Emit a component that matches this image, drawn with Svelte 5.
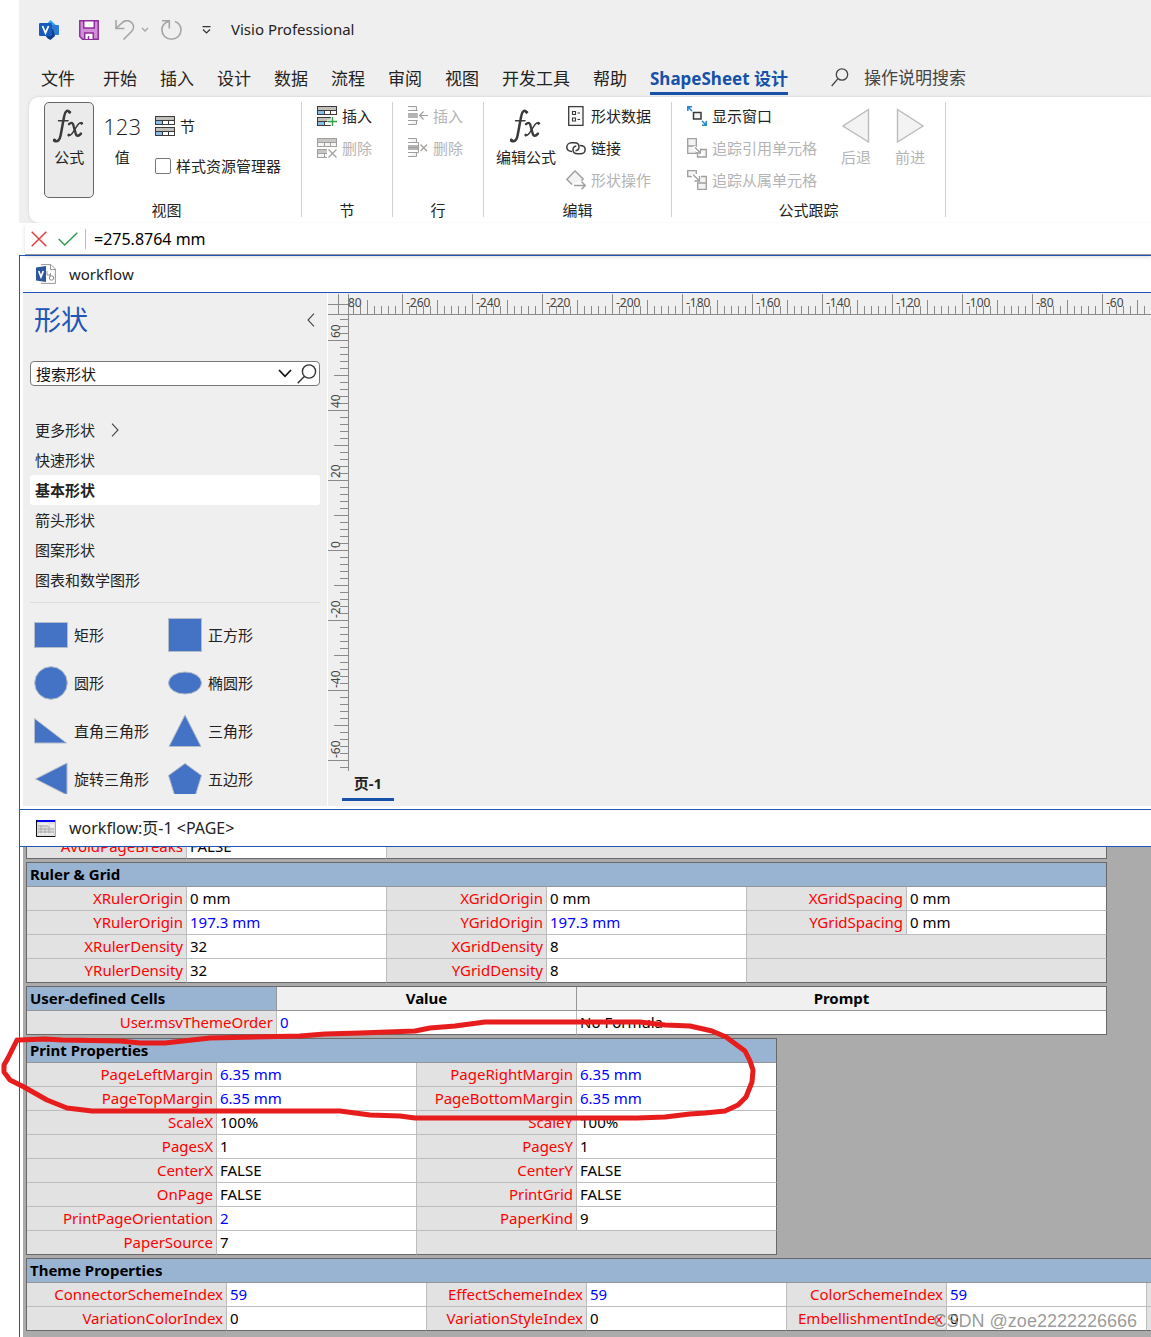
<script>
  const tabs = ['开始', '插入', '设计', '数据', '流程', '审阅', '视图', '开发工具', '帮助'];
  const stencils = ['快速形状', '基本形状', '箭头形状', '图案形状', '图表和数学图形'];
  const shapes = [
    { name: '矩形', kind: 'rect' },
    { name: '正方形', kind: 'square' },
    { name: '圆形', kind: 'circle' },
    { name: '椭圆形', kind: 'ellipse' },
    { name: '直角三角形', kind: 'right' },
    { name: '三角形', kind: 'triangle' },
    { name: '旋转三角形', kind: 'rotated' },
    { name: '五边形', kind: 'pentagon' }
  ];

  const hTicks = Array.from({ length: 340 }, (_, i) => {
    const x = 4 + i * 7;
    const step = (x - 53 + 700) % 70;
    return { x: x + 21, top: step === 0 ? 1 : step === 35 ? 7 : 13 };
  });
  const hLabels = Array.from({ length: 11 }, (_, i) => ({ x: 78 + i * 70, text: String(-260 + i * 20) }));

  const vTicks = Array.from({ length: 65 }, (_, i) => {
    const y = 5 + i * 7;
    const step = (y - 26 + 700) % 70;
    return { y, left: step === 0 ? 0 : step === 35 ? 6 : 12 };
  });
  const vLabels = [60, 40, 20, 0, -20, -40, -60].map((n, i) => ({ y: 23 + i * 70, text: String(n) }));

  const rulerRows = [
    [['XRulerOrigin', '0 mm'], ['XGridOrigin', '0 mm'], ['XGridSpacing', '0 mm']],
    [['YRulerOrigin', '197.3 mm', true], ['YGridOrigin', '197.3 mm', true], ['YGridSpacing', '0 mm']],
    [['XRulerDensity', '32'], ['XGridDensity', '8']],
    [['YRulerDensity', '32'], ['YGridDensity', '8']]
  ];
  const printRows = [
    [['PageLeftMargin', '6.35 mm', true], ['PageRightMargin', '6.35 mm', true]],
    [['PageTopMargin', '6.35 mm', true], ['PageBottomMargin', '6.35 mm', true]],
    [['ScaleX', '100%'], ['ScaleY', '100%']],
    [['PagesX', '1'], ['PagesY', '1']],
    [['CenterX', 'FALSE'], ['CenterY', 'FALSE']],
    [['OnPage', 'FALSE'], ['PrintGrid', 'FALSE']],
    [['PrintPageOrientation', '2', true], ['PaperKind', '9']],
    [['PaperSource', '7']]
  ];
  const themeRows = [
    [['ConnectorSchemeIndex', '59', true], ['EffectSchemeIndex', '59', true], ['ColorSchemeIndex', '59', true]],
    [['VariationColorIndex', '0'], ['VariationStyleIndex', '0'], ['EmbellishmentIndex', '0']]
  ];
  const sections = [
    { title: '', cols: [160, 200, 160, 200, 160, 200], rows: [[['AvoidPageBreaks', 'FALSE']]] },
    { title: 'Ruler & Grid', cols: [160, 200, 160, 200, 160, 200], rows: rulerRows },
    { user: true, cols: [250, 300, 530] },
    { title: 'Print Properties', cols: [190, 200, 160, 200], rows: printRows },
    { title: 'Theme Properties', cols: [200, 200, 160, 200, 160, 200, 160], rows: themeRows }
  ];
  const total = (cols) => cols.reduce((a, b) => a + b, 1);
</script>

{#snippet fx()}
  <svg class="big" width="36" height="36" viewBox="0 0 36 36" fill="none" stroke="#3b3a39" stroke-linecap="round">
    <path d="M18.5 4.2C16.5 1.4 14 3 13.2 8L9.6 27.5C8.8 32 6.4 34.6 3.2 32.6" stroke-width="2.5" />
    <path d="M7.5 12.8H17" stroke-width="1.5" />
    <path d="M18 16.2C20.5 13.8 22 14.6 22.8 18.6L24.6 25.2C25.4 28.6 27.4 28.6 30 25.6" stroke-width="2.4" />
    <path d="M31 15C27.8 13.6 26.6 17.4 24.2 20.8C21.8 24.4 20.6 28.2 17.4 27.6" stroke-width="1.4" />
    <circle cx="18.6" cy="4.2" r="1.1" fill="#3b3a39" /><circle cx="3.4" cy="32" r="1.1" fill="#3b3a39" />
    <circle cx="30.6" cy="15.4" r="1" fill="#3b3a39" /><circle cx="17.8" cy="27" r="1" fill="#3b3a39" />
  </svg>
{/snippet}

{#snippet section(kind)}
  <svg width="20" height="20" viewBox="0 0 20 20" fill="none">
    {#if kind === 'plain'}
      <path d="M0 0H20V9H0ZM0 11H20V20H0Z" fill="#3b3a39" />
      <path d="M1 1H19V4H1ZM1 12H19V15H1Z" fill="#c2c0bd" />
      <path d="M1 5H7V8H1ZM1 16H7V19H1Z" fill="#83beec" />
      <path d="M8 5H13V8H8ZM14 5H19V8H14ZM8 16H13V19H8ZM14 16H19V19H14Z" fill="#fff" />
    {:else if kind === 'insert'}
      <path d="M0 0H20V9H0ZM0 11H14V20H0Z" fill="#3b3a39" />
      <path d="M1 1H19V4H1ZM1 12H14V15H1Z" fill="#c2c0bd" />
      <path d="M1 5H7V8H1ZM1 16H7V19H1Z" fill="#83beec" />
      <path d="M8 5H13V8H8ZM14 5H19V8H14ZM8 16H14V19H8Z" fill="#fff" />
      <path d="M15.5 10V20M10.5 15.5H20" stroke="#fff" stroke-width="3.4" />
      <path d="M15.5 11V20M11 15.5H20" stroke="#2f9e44" stroke-width="1.4" />
    {:else}
      <path d="M0 0H20V9H0ZM0 11H12V20H0Z" fill="#a19f9d" />
      <path d="M1 1H19V4H1ZM1 12H11V15H1Z" fill="#c8c6c4" />
      <path d="M1 5H7V8H1ZM8 5H13V8H8ZM14 5H19V8H14ZM1 16H7V19H1ZM8 16H12V19H8Z" fill="#f5f5f5" />
      <path d="M10 10H20V20H10Z" fill="#fff" />
      <path d="M11.5 11.5L19.5 19.5M19.5 11.5L11.5 19.5" stroke="#a19f9d" stroke-width="1.2" />
    {/if}
  </svg>
{/snippet}

{#snippet rowIcon(kind)}
  <svg width="20" height="20" viewBox="0 0 20 20" fill="none" stroke="#a19f9d" stroke-width="1">
    <path d="M0 .5H8.5V5.5M0 18.5H8.5V13.5" fill="#f3f3f3" />
    <path d="M0 4.5H10.5V14.5H0" fill="#fff" />
    <path d="M0 7H10V12H0Z" fill="#b5b3b1" stroke="none" />
    {#if kind === 'insert'}
      <path d="M10.8 4V15" stroke="#fff" stroke-width="2" /><path d="M20 9.5H12M15.5 5.5L11.7 9.5L15.5 13.5" stroke-width="1.2" />
    {:else}
      <path d="M0 9.5H10.5" /><path d="M12.5 6.5L19 13M19 6.5L12.5 13" stroke-width="1.2" />
    {/if}
  </svg>
{/snippet}

{#snippet trace(kind)}
  <svg width="20" height="20" viewBox="0 0 20 20" fill="#f3f3f3" stroke="#a19f9d" stroke-width="1.3">
    {#if kind === 'from'}
      <path d="M.7.7H9.3V15.3H.7ZM.7 8H9.3" /><path d="M14 11.5H19.3V19H10.5V15.5" />
      <path d="M6.5 9L16 17" stroke="#fff" stroke-width="4" /><path d="M8 9.5L13.5 15M13.5 10.5V15H9" fill="none" />
    {:else}
      <path d="M5 6.5H.7V.7H9.3V4" /><path d="M14 6.5H19.3V19.3H10.7V12M10.7 13H19.3" />
      <path d="M5 4L13 11" stroke="#fff" stroke-width="4" /><path d="M6 4.5L12.5 11M12.5 6V11H7.5" fill="none" />
    {/if}
  </svg>
{/snippet}

<div class="app">
  <header>
    <div class="titlebar">
      <svg width="20" height="20" viewBox="0 0 20 20">
        <path d="M11.5 0L20 8L11.5 12L5 7Z" fill="#34a5ee" /><rect x="11" y="5" width="9" height="10" rx="1" fill="#2b7cd3" />
        <path d="M6 12L14 9L16 16L11.5 20Q6 18 6 12Z" fill="#103f91" /><rect y="3" width="13" height="13" rx="1.2" fill="#185abd" />
        <path d="M3.5 6L6.5 13L9.5 6" fill="none" stroke="#fff" stroke-width="1.8" />
      </svg>
      <button class="icon save" aria-label="保存">
        <svg width="20" height="20" viewBox="0 0 20 20" stroke="#8f2c9c" stroke-width="1.5">
          <path d="M.8.8H19.2V19.2H3.5L.8 16.5Z" fill="#d48fd9" /><path d="M4.7.8H15.3V8H4.7ZM5.7 19V13H14.3V19" fill="#fff" /><path d="M9.5 16V19" />
        </svg>
      </button>
      <button class="icon undo" aria-label="撤消">
        <svg width="34" height="20" viewBox="0 0 34 20" fill="none" stroke="#a5a5a5" stroke-width="1.6">
          <path d="M1 0V8.5H9.5M1.5 8L7.5 2.3C11 -.5 15 .5 17 3C19.5 6 18.5 9.5 16.5 11.5L8.5 19.5" /><path d="M27 8L30 11L33 8" stroke-width="1.3" />
        </svg>
      </button>
      <button class="icon redo" aria-label="重复">
        <svg width="21" height="20" viewBox="0 0 21 20" fill="none" stroke="#a5a5a5" stroke-width="1.6">
          <path d="M1 .8H8.3V8.5M8 1.2C3.5 2.5.9 6 .9 10C.9 15 5 19.2 10.5 19.2S20 15 20 10C20 6 17.5 2.7 14 1.4" />
        </svg>
      </button>
      <button class="icon more" aria-label="自定义快速访问工具栏">
        <svg width="9" height="8" viewBox="0 0 9 8" fill="none" stroke="#333" stroke-width="1.2"><path d="M.5 .7H8.5M1 3.5L4.5 7L8 3.5" /></svg>
      </button>
      <span class="appname">Visio Professional</span>
    </div>
    <nav class="tabs">
      <button class="file">文件</button>
      {#each tabs as tab}<button>{tab}</button>{/each}
      <button class="active">ShapeSheet 设计</button>
      <button class="tell">
        <svg width="18" height="19" viewBox="0 0 18 19" fill="none" stroke="#444" stroke-width="1.3"><circle cx="11" cy="6.5" r="5.7" /><path d="M7 10.7L.7 18" /></svg>
        操作说明搜索
      </button>
    </nav>
    <div class="ribbon">
      <section class="group view">
        <div class="tools">
          <button class="large pressed">{@render fx()}<span>公式</span></button>
          <button class="large value"><span class="num">123</span><span>值</span></button>
          <div class="stack loose">
            <button class="small">{@render section('plain')}节</button>
            <label class="small"><input type="checkbox" />样式资源管理器</label>
          </div>
        </div>
        <h2>视图</h2>
      </section>
      <section class="group">
        <div class="tools">
          <div class="stack">
            <button class="small">{@render section('insert')}插入</button>
            <button class="small" disabled>{@render section('delete')}删除</button>
          </div>
        </div>
        <h2>节</h2>
      </section>
      <section class="group">
        <div class="tools">
          <div class="stack">
            <button class="small" disabled>{@render rowIcon('insert')}插入</button>
            <button class="small" disabled>{@render rowIcon('delete')}删除</button>
          </div>
        </div>
        <h2>行</h2>
      </section>
      <section class="group edit">
        <div class="tools">
          <button class="large">{@render fx()}<span>编辑公式</span></button>
          <div class="stack">
            <button class="small">
              <svg width="20" height="20" viewBox="0 0 20 20" fill="none" stroke="#3b3a39" stroke-width="1.3"><path d="M2.7.7H17V19.3H2.7Z" fill="#fafafa" /><path d="M6.5 5.5H9.5V8.5H6.5ZM6.5 12H9.5V15H6.5ZM11.5 7H14M11.5 13.5H14" stroke-width="1.1" /></svg>
              形状数据
            </button>
            <button class="small">
              <svg width="20" height="20" viewBox="0 0 20 20" fill="none" stroke="#3b3a39" stroke-width="1.5"><path d="M6 13.5C2.5 13.5.8 11.5.8 9.3S2.6 4.8 5.5 4.8H8.5C11.5 4.8 13 6.8 13 9S11.5 12.5 9.5 12.7" /><path d="M13.8 7.5C17.5 7.5 19.2 9.3 19.2 11.5S17.5 15.8 14.5 15.8H11.5C8.5 15.8 7 14 7 11.8S8.3 8.3 10.3 8" /></svg>
              链接
            </button>
            <button class="small" disabled>
              <svg width="20" height="20" viewBox="0 0 20 20" fill="#f3f3f3" stroke="#a19f9d" stroke-width="1.4"><path d="M6 14.5L.9 9.3L9 .9L17.2 9L15.5 10.8" /><path d="M8 15.5H19M15.5 11.5L19.3 15.5L15.5 19.3" fill="none" /></svg>
              形状操作
            </button>
          </div>
        </div>
        <h2>编辑</h2>
      </section>
      <section class="group audit">
        <div class="tools">
          <div class="stack">
            <button class="small">
              <svg width="20" height="20" viewBox="0 0 20 20" fill="none" stroke="#1e88d2" stroke-width="1.5"><path d="M6.5 6.5H14V13H6.5Z" fill="#f3f3f3" stroke="#3b3a39" /><path d="M.8 5V.8H5M1 1L5 5M19.2 15V19.2H15M19 19L15 15" /></svg>
              显示窗口
            </button>
            <button class="small" disabled>{@render trace('from')}追踪引用单元格</button>
            <button class="small" disabled>{@render trace('to')}追踪从属单元格</button>
          </div>
          <button class="large nav" disabled>
            <svg class="big" width="28" height="36" viewBox="0 0 28 36" fill="#f3f3f3" stroke="#bcbcbc" stroke-width="1.4"><path d="M26.5 1.5V34L1 18Z" /></svg><span>后退</span>
          </button>
          <button class="large nav" disabled>
            <svg class="big" width="28" height="36" viewBox="0 0 28 36" fill="#f3f3f3" stroke="#bcbcbc" stroke-width="1.4"><path d="M1.5 1.5V34L27 18Z" /></svg><span>前进</span>
          </button>
        </div>
        <h2>公式跟踪</h2>
      </section>
    </div>
  </header>

  <div class="formula">
    <button class="icon" aria-label="取消"><svg width="16" height="16" viewBox="0 0 16 16" stroke="#e33e3e" stroke-width="1.5"><path d="M.7.7L15.3 15.3M15.3.7L.7 15.3" /></svg></button>
    <button class="icon" aria-label="接受"><svg width="20" height="14" viewBox="0 0 20 14" fill="none" stroke="#2f9e4f" stroke-width="1.5"><path d="M.7 7L6.7 13L19.3.7" /></svg></button>
    <input type="text" aria-label="公式" value="=275.8764 mm" />
  </div>

  <main>
    <div class="wintitle">
      <svg width="20" height="20" viewBox="0 0 20 20">
        <path d="M5 .6H15L19.4 5V19.4H5" fill="#fff" stroke="#999" /><path d="M14.5 .6V5.5H19.4M11 7V11H14.5V9M14 10V13" fill="none" stroke="#999" /><circle cx="15.5" cy="14" r="2.2" fill="none" stroke="#888" />
        <path d="M0 3.5L10 2V18L0 16.5Z" fill="#2b579a" /><path d="M2.7 7L5 13L7.3 7" fill="none" stroke="#fff" stroke-width="1.7" />
      </svg>
      <span>workflow</span>
    </div>

    <div class="workspace">
      <aside>
        <div class="panelhead">
          <h1>形状</h1>
          <button class="icon" aria-label="折叠"><svg width="8" height="14" viewBox="0 0 8 14" fill="none" stroke="#444" stroke-width="1.1"><path d="M7 .7L1 7L7 13.3" /></svg></button>
        </div>
        <div class="search">
          <input type="text" aria-label="搜索形状" placeholder="搜索形状" />
          <svg width="14" height="9" viewBox="0 0 14 9" fill="none" stroke="#111" stroke-width="1.7"><path d="M1 1L7 7.3L13 1" /></svg>
          <svg width="20" height="20" viewBox="0 0 20 20" fill="none" stroke="#333" stroke-width="1.4"><circle cx="12" cy="7.5" r="6.6" /><path d="M7.3 12.5L.7 19.3" /></svg>
        </div>
        <div class="stencils">
          <button>更多形状<svg width="8" height="14" viewBox="0 0 8 14" fill="none" stroke="#444" stroke-width="1.1"><path d="M1 .7L7 7L1 13.3" /></svg></button>
          {#each stencils as s, i}<button class:chosen={i === 1}>{s}</button>{/each}
        </div>
        <div class="shapes">
          {#each shapes as s}
            <div class="shape">
              <svg width="34" height="34" viewBox="0 0 34 34" fill="#4472c4" stroke="#b4bccb">
                {#if s.kind === 'rect'}<rect x=".5" y="4.5" width="33" height="25" />
                {:else if s.kind === 'square'}<rect x=".5" y=".5" width="33" height="33" />
                {:else if s.kind === 'circle'}<circle cx="17" cy="17" r="16.3" />
                {:else if s.kind === 'ellipse'}<ellipse cx="17" cy="17" rx="16.5" ry="11" />
                {:else if s.kind === 'right'}<path d="M.5 4.5L32.5 29H.5Z" />
                {:else if s.kind === 'triangle'}<path d="M17 1L33 32.5H1Z" />
                {:else if s.kind === 'rotated'}<path d="M33 1V33L1.5 17Z" />
                {:else}<path d="M17 1.5L33.5 13.5L27.5 33H6.5L.5 13.5Z" />{/if}
              </svg>
              <span>{s.name}</span>
            </div>
          {/each}
        </div>
      </aside>

      <div class="canvas">
        <svg class="hruler" height="22" shape-rendering="crispEdges">
          <path d="M0 11.5H20M10.5 1V21M20.5 1V22M0 21.5H3000" />
          {#each hTicks as t}<path d="M{t.x + 0.5},{t.top}V21" />{/each}
          {#each hLabels as l}<text x={l.x} y="14">{l.text}</text>{/each}
          <text x="20" y="14">80</text>
        </svg>
        <svg class="vruler" width="21" height="456" shape-rendering="crispEdges">
          <path d="M20.5 0V456" />
          {#each vTicks as t}<path d="M{t.left},{t.y - 0.5}H20" />{/each}
          {#each vLabels as l}<text transform="translate(12 {l.y}) rotate(-90)">{l.text}</text>{/each}
        </svg>
        <button class="pagetab">页-1</button>
      </div>
    </div>

    <div class="wintitle second">
      <svg width="20" height="17" viewBox="0 0 20 17">
        <rect x=".5" y=".5" width="19" height="16" fill="#ddd" stroke="#aaa" /><path d="M.5 0V16.5H19" fill="none" stroke="#111" /><rect x="1" y="0" width="18" height="2" fill="#00f" />
        <path d="M2 6H12M2 9H18M2 12H18M5 5V15M9 8V15M13 4V15" stroke="#aaa" /><path d="M12 5H18M14 7H18M3 14H17M3 4H12" stroke="#fff" />
      </svg>
      <span>workflow:页-1 &lt;PAGE&gt;</span>
    </div>

    <div class="sheet">
      {#each sections as s}
        <table style:width="{total(s.cols)}px">
          <colgroup>{#each s.cols as c}<col style:width="{c}px" />{/each}</colgroup>
          <tbody>
            {#if s.user}
              <tr><th class="title">User-defined Cells</th><th class="col">Value</th><th class="col">Prompt</th></tr>
              <tr><th class="name">User.msvThemeOrder</th><td class="local">0</td><td>No Formula</td></tr>
            {:else}
              {#if s.title}<tr><th class="title" colspan={s.cols.length}>{s.title}</th></tr>{/if}
              {#each s.rows as row}
                <tr>
                  {#each row as [name, value, local]}<th class="name">{name}</th><td class:local>{value}</td>{/each}
                  {#if s.cols.length > row.length * 2}<td class="blank" colspan={s.cols.length - row.length * 2}></td>{/if}
                </tr>
              {/each}
            {/if}
          </tbody>
        </table>
      {/each}
    </div>
  </main>

  <svg class="ink" width="760" height="104" viewBox="0 1018 760 104" fill="none">
    <path d="M19 1040L45 1039L62 1040L120 1041L140 1043L165 1043L210 1038L300 1036L325 1034L360 1033L415 1031L430 1028L455 1026L485 1022H640L665 1025L690 1026L712 1031L726 1037L745 1051L750 1061L753 1070L752 1082L746 1097L738 1105L725 1111L705 1113L690 1114L665 1117L637 1118H415L400 1116L370 1115L340 1111H92L67 1108L47 1100L24 1087L10 1080L4 1072V1065L8 1058L17 1040" />
  </svg>
  <div class="mark">CSDN @zoe2222226666</div>
</div>

<style>
  :global(body) { margin: 0; background: #fff; }
  .app { position: relative; overflow: hidden; font: 15px/20px "Noto Sans", "Noto Sans CJK SC", sans-serif; color: #222; }
  .app :global(*) { box-sizing: border-box; }
  svg { flex: none; display: block; }
  button { font: inherit; color: inherit; background: none; border: 0; padding: 0; white-space: nowrap; }
  header { margin-left: 19px; background: #efefef; overflow: hidden; }
  .titlebar { display: flex; align-items: center; height: 60px; padding-left: 20px; }
  .save { margin-left: 20px; }
  .undo { margin-left: 16px; }
  .redo { margin-left: 12px; }
  .more { margin-left: 20px; }
  .appname { margin-left: 20px; padding-bottom: 2px; }
  .tabs { display: flex; align-items: center; gap: 23px; height: 37px; padding: 0 0 2px 22px; font-size: 17px; }
  .tabs button { height: 35px; line-height: 38px; }
  .tabs .file { margin-right: 5px; }
  .tabs .active { color: #1651aa; font-weight: 700; border-bottom: 3px solid #1651aa; }
  .tabs .tell { display: flex; align-items: center; gap: 15px; margin-left: 20px; color: #444; }
  .ribbon { display: flex; height: 126px; margin-left: 10px; padding-top: 5px; background: #fff; border-radius: 10px 0 0 10px; box-shadow: 0 0 3px #ccc; }
  .group { flex: none; height: 115px; border-right: 1px solid #d0d0d0; }
  .tools { display: flex; height: 101px; padding: 0 20px 0 15px; }
  h2 { margin: 0; font: inherit; line-height: 14px; text-align: center; }
  .view { width: 273px; }
  .view h2 { padding-left: 3px; }
  .edit .tools { padding: 0 20px 0 12px; }
  .large { display: flex; flex-direction: column; align-items: center; height: 96px; padding-top: 6px; gap: 3px; }
  .large span { line-height: 20px; }
  .pressed { width: 52px; background: #ebebeb; border: 1px solid #666; border-radius: 5px; padding-top: 5px; }
  .value { width: 38px; margin-left: 9px; }
  .large .num { font: 300 22px/36px "Open Sans", sans-serif; color: #222; }
  .stack { display: flex; flex-direction: column; gap: 8px; padding-top: 2px; }
  .small { display: flex; align-items: center; gap: 5px; height: 24px; white-space: nowrap; }
  .loose { margin-left: 14px; padding-top: 12px; gap: 16px; }
  input[type="checkbox"] { appearance: none; width: 16px; height: 16px; margin: 0; border: 1px solid #777; border-radius: 2px; background: #fff; }
  .edit .stack { margin-left: 10px; }
  .nav { margin-left: 24px; width: 30px; }
  button:disabled { color: #b4b4b4; }
  .formula { display: flex; align-items: center; gap: 11px; height: 32px; margin-left: 25px; padding: 0 6px; border-bottom: 1px solid #999; box-shadow: 0 2px 4px #ddd; }
  .formula input { flex: 1; height: 20px; border: 0; border-left: 1px solid #bbb; padding: 0 8px; margin-left: -4px; font: inherit; font-size: 16px; color: #000; outline: 0; background: #fff; }
  main { margin-left: 19px; border-left: 1px solid #1f56b5; border-top: 1px solid #1f56b5; padding-left: 3px; }
  .wintitle { display: flex; align-items: center; gap: 13px; height: 37px; padding-left: 13px; border-bottom: 1px solid #1f56b5; }
  .second { margin-left: -3px; padding-left: 16px; height: 38px; margin-top: 3px; border-top: 1px solid #1f56b5; font-size: 16px; }
  .workspace { display: flex; height: 513px; background: #efefef; }
  aside { width: 305px; border-right: 1px solid #fff; padding: 10px 7px 0; }
  .panelhead { display: flex; align-items: center; justify-content: space-between; height: 34px; padding: 0 5px 0 4px; }
  h1 { margin: 0; font-weight: 400; font-size: 27px; line-height: 34px; color: #1f56b5; }
  .search { display: flex; align-items: center; gap: 5px; height: 25px; margin-top: 24px; border: 1px solid #777; border-radius: 4px; background: #fff; padding-right: 2px; }
  .search input { flex: 1; min-width: 0; border: 0; background: none; padding: 0 5px; font: inherit; outline: 0; }
  .search input::placeholder { color: #111; opacity: 1; }
  .stencils { display: flex; flex-direction: column; margin-top: 29px; padding-bottom: 7px; border-bottom: 1px solid #ddd; }
  .stencils button { display: flex; align-items: center; gap: 16px; height: 30px; padding-left: 5px; }
  .stencils .chosen { background: #fff; border-radius: 3px; font-weight: 700; }
  .shapes { display: grid; grid-template-columns: 134px 1fr; grid-auto-rows: 34px; row-gap: 14px; height: 191px; padding: 15px 0 0 4px; overflow: hidden; }
  .shape { display: flex; align-items: center; gap: 6px; white-space: nowrap; }
  .canvas { flex: 1; min-width: 0; display: flex; flex-direction: column; align-items: flex-start; }
  .hruler { width: 100%; }
  .hruler path, .vruler path { stroke: #8a8a8a; fill: none; }
  .canvas text { font-size: 12px; fill: #444; }
  .pagetab { width: 52px; height: 30px; margin-left: 14px; padding-bottom: 3px; font-weight: 700; border-bottom: 3px solid #1651aa; }
  .sheet { display: flex; flex-direction: column; gap: 3px; background: #ababab; padding: 0 0 6px 3px; overflow: hidden; color: #000; }
  table { flex: none; table-layout: fixed; border-collapse: separate; border-spacing: 0; border-left: 1px solid #696969; border-top: 1px solid #696969; }
  table:first-child { margin-top: -13px; }
  th, td { height: 24px; padding: 0 3px 2px; border-right: 1px solid #bcbcbc; border-bottom: 1px solid #bcbcbc; background: #fff; text-align: left; line-height: 20px; font-weight: 400; white-space: nowrap; }
  .name { background: #e2e2e2; color: #f00; text-align: right; }
  .blank { background: #e2e2e2; }
  .title, .col { font-weight: 700; border-color: #969696; }
  .title { background: #99b3d2; }
  .col { background: #f0f0f0; text-align: center; }
  .local { color: #00f; }
  tr > :last-child { border-right-color: #696969; }
  tr:last-child > * { border-bottom-color: #696969; }
  .ink { position: absolute; left: 0; top: 1018px; pointer-events: none; }
  .ink path { stroke: #e71d1d; stroke-width: 5; stroke-linejoin: round; stroke-linecap: round; }
  .mark { position: absolute; right: 14px; bottom: 6px; font: 18px/20px "Liberation Sans", sans-serif; color: rgba(110, 110, 110, 0.7); text-shadow: 1px 1px #fff8; }
</style>
